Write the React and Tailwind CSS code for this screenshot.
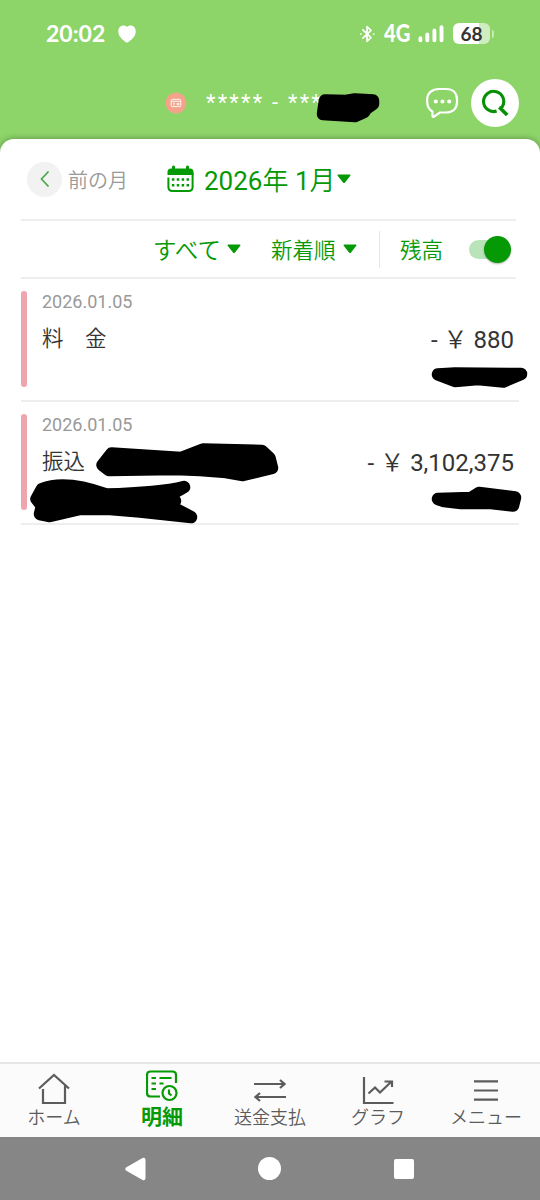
const Scribble = ({ className, width, height, d }) => (
  <svg className={`absolute overflow-visible ${className}`} width={width} height={height} viewBox={`0 0 ${width} ${height}`} aria-hidden="true">
    <path d={d} fill="#000" stroke="#000" strokeWidth="12.5" strokeLinejoin="round" strokeLinecap="round" />
  </svg>
);

const Caret = () => (
  <svg width="14" height="10" viewBox="0 0 14 10" className="block shrink-0" aria-hidden="true">
    <path d="M1.2 .5h11.6q1.2 .2 .5 1.3L8 8.6q-1 1-2 0L.7 1.8Q0 .7 1.2 .5Z" fill="#069906" />
  </svg>
);

function StatusBar() {
  return (
    <div className="flex h-[67px] items-center pl-[46px] pr-[46px] text-white">
      <span className="w-[60px] pb-[2px] whitespace-nowrap font-['Lato',sans-serif] text-[23px] leading-[26px] font-bold">20:02</span>
      <svg className="ml-[12px]" width="18" height="18" viewBox="0 0 18 18" aria-hidden="true">
        <path d="M9 2.1C7.2.1 3.8 0 1.8 2.1-.2 4.3-.2 8 1.5 11c1.5 2.600 4.300 4.600 6 5.900q1.500 1 3 0c1.700-1.300 4.500-3.300 6-5.900 1.700-3 1.700-6.700-.3-8.900C14.200 0 10.800.1 9 2.100Z" fill="#fff" />
      </svg>
      <svg className="ml-auto" width="16" height="18" viewBox="0 0 16 18" fill="none" stroke="#fff" strokeWidth="1.7" strokeLinejoin="round" strokeLinecap="round" aria-hidden="true">
        <path d="M3.900 4.800 12 12.700 8 16.300V1.700L12 5.300 3.900 13.200M1.700 9h.3M14.500 9h.3" />
      </svg>
      <span className="ml-[9px] w-[26px] pb-px whitespace-nowrap font-['Lato',sans-serif] text-[24px] leading-[26px] font-black">
        <span className="inline-block origin-left scale-x-[0.84]">4G</span>
      </span>
      <svg className="ml-[8px]" width="26" height="18" viewBox="0 0 26 18" stroke="#fff" strokeWidth="3.900" strokeLinecap="round" aria-hidden="true">
        <path d="M2.400 13.200v2M9.300 9.500v5.700M16.400 5.500v9.700M23.500 2.200v13" />
      </svg>
      <div className="ml-[9px] flex items-center gap-[2px]">
        <div className="flex h-[21px] w-[37px] items-center justify-center rounded-[6px] bg-linear-to-r from-white from-70% to-[#d0edc0] to-70% font-['Lato',sans-serif] text-[19px] leading-none font-bold text-[#333]">68</div>
        <div className="h-[8px] w-[2px] rounded-r bg-[#c8eab3]" />
      </div>
    </div>
  );
}

function AccountBar() {
  return (
    <div className="relative flex h-[72px] items-center pl-[165px] pr-[21px]">
      <svg width="22" height="22" viewBox="0 0 22 22" fill="none" aria-hidden="true">
        <circle cx="11" cy="11" r="10.500" fill="#f4a38b" />
        <rect x="6.200" y="7.300" width="9.600" height="7.300" rx="1.200" stroke="#fff" strokeWidth=".9" />
        <path d="M6.500 9.300h9M8 11.300h2M8 12.800h1.500M12 11.500h2v1.200h-2z" stroke="#fff" strokeWidth=".9" />
      </svg>
      <span className="ml-[19px] whitespace-pre font-['Roboto',sans-serif] text-[22px] leading-[24px] tracking-[2.200px] text-white">***** - ***</span>
      <Scribble className="left-[316px] top-[26px]" width={64} height={31} d="M9 7.500 30 8 39 6.500 57 7.500 57 11 50 16 48 19 39 23 7 21Z" />
      <svg className="ml-auto" width="34" height="32" viewBox="0 0 34 32" fill="none" aria-hidden="true">
        <path d="M13 2h7c7 0 11 4 11 10.500v2.500c0 6.500-4 10.500-11 10.500h-6l-6 4.200c-1 .5-1.500 0-1.500-1V24.500C3 22.500 1.200 19 1.200 15V12.500C1.200 6 6 2 13 2Z" stroke="#fff" strokeWidth="2.200" strokeLinejoin="round" />
        <path d="M9.800 14.500h.01M16.500 14.500h.01M23.200 14.500h.01" stroke="#fff" strokeWidth="4.200" strokeLinecap="round" />
      </svg>
      <div className="ml-[11px] flex size-[48px] items-center justify-center rounded-full bg-white">
        <svg width="28" height="28" viewBox="0 0 28 28" fill="none" stroke="#069006" strokeWidth="3.100" strokeLinecap="butt" aria-hidden="true">
          <path d="M15.600 22.100A10.100 10.100 0 1 1 21.200 17.800L19 19" />
          <path d="M18.300 18.300 26.200 26" strokeWidth="3.700" />
        </svg>
      </div>
    </div>
  );
}

function MonthPicker() {
  return (
    <div className="flex h-[82px] items-center border-b-2 border-[#eeeeee] pl-[6px] text-[#069906]">
      <div className="flex size-[35px] items-center justify-center rounded-full bg-[#f2f2f2]">
        <svg width="12" height="18" viewBox="0 0 12 18" fill="none" stroke="#4aa64a" strokeWidth="1.700" aria-hidden="true"><path d="m9.500 1.500-7 7.500 7 7.500" /></svg>
      </div>
      <span className="ml-[6px] w-[60px] pt-[3px] whitespace-nowrap text-[20px] leading-[28px] font-[350] text-[#999]">前の月</span>
      <svg className="ml-[39px]" width="27" height="28" viewBox="0 0 27 28" fill="none" aria-hidden="true">
        <path d="M1.400 12.500v9.500q0 4 4 4h16.200q4 0 4-4V8" stroke="#069906" strokeWidth="2" />
        <path d="M.5 10V7Q.5 3.500 4 3.500h1V1.500q1.500-2 3 0v2h11V1.500q1.500-2 3 0v2h1q3.500 0 3.500 3.500v3Z" fill="#069906" />
        <path d="M11 14.500h.01M15.900 14.500h.01M20.800 14.500h.01M6.100 14.500h.01M6.100 20.300h.01M11 20.300h.01M15.900 20.300h.01M20.800 20.300h.01" stroke="#069906" strokeWidth="2.500" strokeLinecap="square" />
      </svg>
      <span className="ml-[10px] w-[131px] pt-[4px] whitespace-nowrap text-[26px] leading-[36px]">2026<span className="font-[350]">年</span> 1<span className="font-[350]">月</span></span>
      <span className="ml-[2px] -mt-px"><Caret /></span>
    </div>
  );
}

function Filters() {
  return (
    <div className="flex h-[58px] items-center border-b-2 border-[#eeeeee] pl-[132px] text-[#069906]">
      <span className="w-[67px] pt-[3px] whitespace-nowrap text-[23.500px] leading-[30px] font-[350]">すべて</span>
      <span className="ml-[7px]"><Caret /></span>
      <span className="ml-[30px] w-[65px] pt-[3px] whitespace-nowrap text-[21.500px] leading-[30px] font-[350]">新着順</span>
      <span className="ml-[7px]"><Caret /></span>
      <div className="ml-[22px] h-[37px] w-px bg-[#e6e6e6]" />
      <span className="ml-[20px] pt-[3px] whitespace-nowrap text-[21.500px] leading-[30px] font-[350]">残高</span>
      <div className="ml-[26px] flex h-[19px] w-[42px] items-center justify-end rounded-full bg-[#b9e3b9]">
        <div className="size-[27px] shrink-0 rounded-full bg-[#069906] shadow-[0_1px_2px_rgba(0,0,0,0.3)]" />
      </div>
    </div>
  );
}

function Transaction({ date, title, amount, children }) {
  return (
    <div className="relative flex border-b-2 border-[#eeeeee] pt-[12px] pb-[13px]">
      <div className="h-[96px] w-[6px] rounded-full bg-[#eea5ad]" />
      <div className="ml-[15px] flex flex-col">
        <span className="text-[18px] leading-[22px] text-[#999]">{date}</span>
        <span className="mt-[11px] whitespace-pre text-[21.500px] leading-[30px] font-[350] text-[#333]">{title}</span>
      </div>
      <div className="ml-auto mt-[33px] flex h-[32px] items-center pr-[5px] text-[24px] leading-[32px] whitespace-pre text-[#333]">
        <span>{'- '}</span>
        <span className="font-[350]">￥</span>
        <span>{' ' + amount}</span>
      </div>
      {children}
    </div>
  );
}

const tabs = [
  {
    label: 'ホーム',
    icon: <path d="M1 15.500 16 2l15 13.500M5 16v14h22V12" />,
  },
  {
    label: '明細',
    active: true,
    icon: (
      <>
        <path d="M14 26.500H4.500q-3.500 0-3.500-3.500V5Q1 1.500 4.500 1.500h22q3.500 0 3.500 3.500v8" />
        <path d="M5.500 8h4.500M13.500 8h12M5.500 13.500h4.500M13.500 13.500h4M5.500 19h4.500" />
        <circle cx="23.500" cy="23" r="7" />
        <path d="M23 19.500v4l2.500 2" />
      </>
    ),
  },
  { label: '送金支払', icon: <path d="M0 11h30M26 7l4.500 4-4.500 4M32 24H2M6 20l-4.500 4 4.500 4" /> },
  { label: 'グラフ', icon: <path d="M2 4v26h29.500M6.500 20.500l6.500-6 5 5L29.500 8.500M22.500 8.500H30V14" /> },
  { label: 'メニュー', icon: <path d="M4 8.300h24M4 17.500h24M4 26.700h24" /> },
];

function TabBar() {
  return (
    <nav className="grid h-[75px] grid-cols-5 border-t-2 border-[#e6e6e6] bg-[#fbfbfb]">
      {tabs.map(({ label, icon, active }) => (
        <div key={label} className={active ? 'flex flex-col items-center pt-[6px] text-[#069906]' : 'flex flex-col items-center pt-[9px] text-[#5c5c5c]'}>
          <svg width="32" height="32" viewBox="0 0 32 32" fill="none" stroke="currentColor" strokeWidth="2.200" aria-hidden="true">{icon}</svg>
          <span className={active ? 'whitespace-nowrap text-[21px] leading-[30px] font-bold' : 'whitespace-nowrap text-[18px] leading-[26px] font-[350]'}>{label}</span>
        </div>
      ))}
    </nav>
  );
}

function SystemNav() {
  return (
    <div className="flex h-[63px] items-center bg-[#868686] pl-[125px] text-white">
      <svg width="21" height="24" viewBox="0 0 21 24" aria-hidden="true"><path d="M1 10.500 17.500 1q3-1 3 2v18q0 3-3 2L1 13.500q-1.500-1.500 0-3Z" fill="currentColor" /></svg>
      <div className="ml-[112px] size-[23px] rounded-full bg-white" />
      <div className="ml-[113px] size-[20px] rounded-[2px] bg-white" />
    </div>
  );
}

export default function App() {
  return (
    <div className="flex h-[1200px] w-[540px] flex-col overflow-hidden bg-[#8dd469] font-['Roboto','Noto_Sans_CJK_JP',sans-serif]">
      <header>
        <StatusBar />
        <AccountBar />
      </header>
      <main className="flex-1 rounded-t-[14px] bg-white shadow-[0_0_6px_rgba(0,0,0,0.35)]">
        <div className="ml-[21px] w-[495px]">
          <MonthPicker />
          <Filters />
        </div>
        <div className="ml-[21px] w-[498px]">
          <Transaction date="2026.01.05" title="料　金" amount="880">
            <Scribble className="left-[410px] top-[88px]" width={97} height={22} d="M7 7.500 24 6.500 90 7 72.500 14.500 47 12 24 14Z" />
          </Transaction>
          <Transaction date="2026.01.05" title="振込" amount="3,102,375">
            <Scribble className="left-[75px] top-[41px]" width={183} height={39} d="M6.500 22 15.500 10.500 85 15 107 6.500 166 8 173.500 15 176 25 147 32 130 29 104 27 79 26 13 27Z" />
            <Scribble className="left-[9px] top-[76px]" width={168} height={46} d="M12 11Q36 2 76 16.500 130 15 154 9L140 17 145 23 138 27 161 39 110 33.500 80 31 50 31 20 38 10 36 12 28 6.500 21Z" />
            <Scribble className="left-[410px] top-[84px]" width={91} height={28} d="M7 13 40 12 48 7 84 11.500 82 19.500 60 17 30 17 13 15Z" />
          </Transaction>
        </div>
      </main>
      <TabBar />
      <SystemNav />
    </div>
  );
}
